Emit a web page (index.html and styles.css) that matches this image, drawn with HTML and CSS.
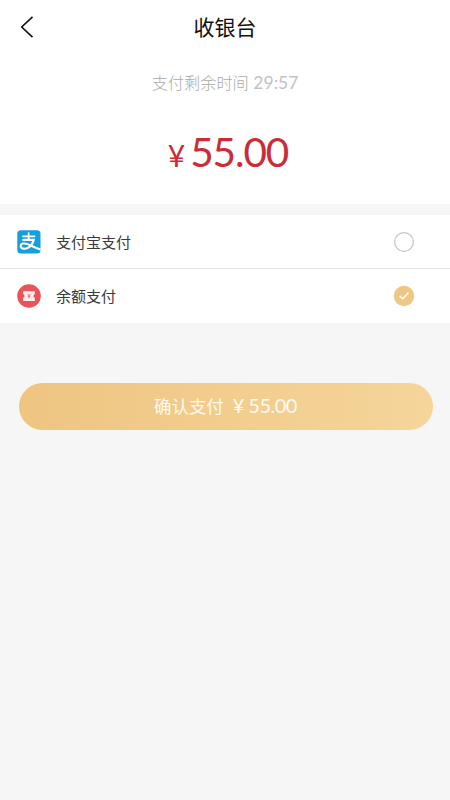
FILE: index.html
```html
<!DOCTYPE html>
<html lang="zh-CN">
<head>
<meta charset="utf-8">
<meta name="viewport" content="width=device-width">
<title>收银台</title>
<link rel="stylesheet" href="styles.css">
</head>
<body>
<header class="nav">
  <svg class="back" viewBox="0 0 14 24" width="14" height="24"><path d="M12.5 1.8 1.7 12l10.8 10.2" fill="none" stroke="#111" stroke-width="1.6"/></svg>
  <h1>收银台</h1>
</header>
<section class="summary">
  <p class="countdown">支付剩余时间 <span class="time">29:57</span></p>
  <p class="amount"><span class="yen">¥</span><span class="num">55.00</span></p>
</section>
<main class="methods">
  <div class="method">
    <svg class="logo" viewBox="0 0 24 24" width="24" height="24">
      <rect x=".3" y=".3" width="23.2" height="23.2" rx="3.5" fill="#159fdc"/>
      <g fill="none" stroke="#fff" stroke-linecap="round">
        <path d="M6 6.3h11.500M11.600 3.200v6.500" stroke-width="1.800"/>
        <path d="M6.200 9.900h10.500c-1 3.600-3.100 6.600-5.800 8-2.800 1.400-7.200 1.100-7.200-1.700 0-3 3.800-3.300 6.800-2.100 3.800 1.500 7.500 3.700 12.300 5.200" stroke-width="2.100"/>
      </g>
    </svg>
    <span class="label">支付宝支付</span>
    <svg class="radio" viewBox="0 0 22 22" width="22" height="22"><circle cx="11" cy="11" r="9.400" fill="#fff" stroke="#c6c6c6" stroke-width="1.300"/></svg>
  </div>
  <div class="method">
    <svg class="logo" viewBox="0 0 24 24" width="24" height="24">
      <circle cx="12" cy="12" r="11.800" fill="#e9545b"/>
      <path d="M6.200 7.300h11.600v3a1.800 1.800 0 0 0 0 3.500v3.200H6.200v-3.200a1.800 1.800 0 0 0 0-3.500z" fill="#fff0ef"/>
      <path d="m10.300 9.800 1.700 1.900 1.700-1.900M12 11.700v2.600M10.600 12.200h2.800" fill="none" stroke="#e9656b" stroke-width="1"/>
    </svg>
    <span class="label">余额支付</span>
    <svg class="radio" viewBox="0 0 22 22" width="22" height="22"><circle cx="11" cy="11" r="10.200" fill="#eec784"/><path d="m6.600 10.800 3.200 3.100 5.700-6.300" fill="none" stroke="#fffaf0" stroke-width="1.700"/></svg>
  </div>
</main>
<button class="pay"><span>确认支付</span><span class="pay-yen">¥</span><span class="pay-num">55.00</span></button>
</body>
</html>
```
FILE: styles.css
```css
* { box-sizing: border-box; }
body {
  margin: 0;
  min-height: 800px;
  background: #f6f6f6;
  font-family: "Noto Sans CJK SC", sans-serif;
  color: #3a3a3a;
}
h1, p { margin: 0; }
.nav {
  height: 54px;
  background: #fff;
  display: grid;
  grid-template-columns: 50px 1fr 50px;
  align-items: center;
}
.back { margin-left: 20px; }
h1 {
  margin-bottom: 3px;
  font-size: 21px;
  line-height: 30px;
  font-weight: 400;
  color: #111;
  text-align: center;
}
.summary {
  height: 150px;
  background: #fff;
  padding-top: 16px;
  text-align: center;
}
.countdown {
  font-size: 16.2px;
  line-height: 24px;
  font-weight: 300;
  color: #aaa;
}
.time {
  margin-left: 1px;
  font-family: Lato, sans-serif;
  font-size: 17.5px;
  font-weight: 400;
  color: #c2c2c2;
}
.amount {
  margin-top: 32px;
  padding-left: 6px;
  height: 50px;
  display: flex;
  justify-content: center;
  align-items: baseline;
  font-family: Lato, sans-serif;
  line-height: 50px;
  color: #cb2c38;
}
.yen { font-size: 30px; margin-right: 5px; }
.num { font-size: 40.5px; letter-spacing: -1.1px; }
.methods {
  margin-top: 11px;
  background: #fff;
}
.method {
  height: 53px;
  padding: 0 35px 0 17px;
  display: flex;
  align-items: center;
}
.method + .method {
  height: 55px;
  border-top: 1px solid #e4e4e4;
}
.label {
  flex: 1;
  margin-left: 15px;
  font-size: 15px;
  line-height: 22px;
}
.pay {
  display: flex;
  justify-content: center;
  align-items: baseline;
  width: 414px;
  height: 47px;
  margin: 60px 0 0 18.5px;
  padding: 0;
  border: 0;
  border-radius: 24px;
  background: linear-gradient(90deg, #eec581, #f5d59b);
  color: #fffaf0;
  font-family: "Noto Sans CJK SC", sans-serif;
  font-size: 17.4px;
  font-weight: 400;
  line-height: 45px;
}
.pay-yen, .pay-num { font-family: Lato, sans-serif; font-size: 20px; }
.pay-yen { margin: 0 4px 0 9px; }
.pay-num { letter-spacing: -.5px; }
```
